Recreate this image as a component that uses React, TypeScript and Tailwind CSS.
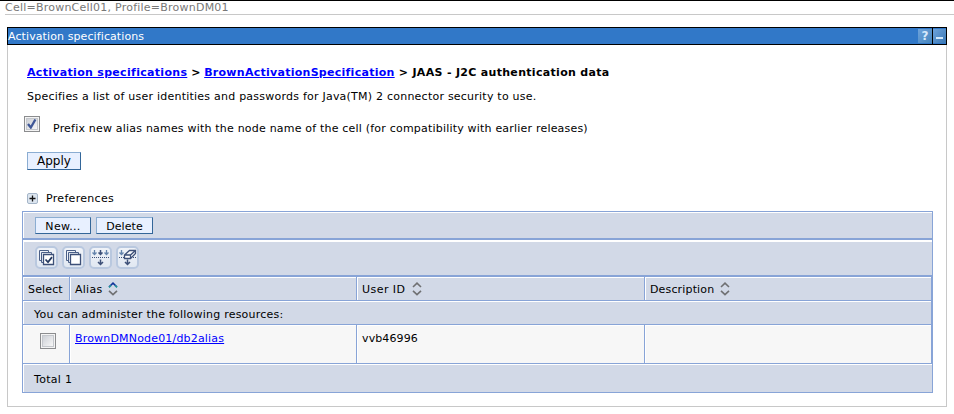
import type { ReactNode } from 'react';

function SortArrows({ active = false }: { active?: boolean }) {
  return (
    <svg width="10" height="14" viewBox="0 0 10 14" fill="none" strokeWidth="1.6" className="shrink-0">
      <path d="M1 5 L5 1.2 L9 5" stroke={active ? '#10339a' : '#6f7072'} />
      {active && <path d="M1 5.4 L3 3.5 M9 5.4 L7 3.5" stroke="#259b9b" />}
      <path d="M1 8.8 L5 12.6 L9 8.8" stroke="#6f7072" />
    </svg>
  );
}

function Button({ children, className }: { children: ReactNode; className: string }) {
  return (
    <button
      className={`flex shrink-0 items-center justify-center whitespace-nowrap border border-t-[#8badd2] border-l-[#8badd2] border-r-[#336699] border-b-[#336699] bg-[#e8f0ff] ${className}`}
    >
      {children}
    </button>
  );
}

function Checkbox({ checked = false }: { checked?: boolean }) {
  return (
    <span className="block size-4 shrink-0 border border-[#8b8c8e] bg-[#f4f4f4] p-px">
      <span className="block size-3 border border-[#c4c7cc] bg-linear-to-br from-[#cdd0d6] to-[#f7f7f7]">
        {checked && (
          <svg width="10" height="10" viewBox="0 0 10 10" fill="none" stroke="#3f5797" strokeWidth="2.3">
            <path d="M1 5 L3.8 8.5 L8.4 0.5" />
          </svg>
        )}
      </span>
    </span>
  );
}

function Tool({ children }: { children: ReactNode }) {
  return (
    <span className="flex size-[23px] items-center justify-center rounded-[5px] border-2 border-[#b9c8df] bg-linear-to-b from-[#f0f3f8] to-[#e1e8f2]">
      <svg width="19" height="19" viewBox="0 0 19 19" fill="none" stroke="#3d5078" strokeWidth="1" className="shrink-0">
        {children}
      </svg>
    </span>
  );
}

function Stack() {
  return (
    <>
      <path d="M2.5 2.5h9v10h-9z" fill="#eef2f8" stroke="#4a5f87" />
      <path d="M4.5 4.5h10v10h-10z" fill="#eef2f8" stroke="#4a5f87" />
      <path d="M6.5 6.5h10v10h-10z" fill="#fff" strokeWidth="1.3" />
    </>
  );
}

const headCell = 'flex items-center gap-[6px] border-l border-[#88a4d7] pt-px shadow-[inset_1px_1px_0_#fff]';
const bodyCell = 'border-l border-[#88a4d7] shadow-[inset_1px_1px_0_#fff]';

export default function App() {
  return (
    <div className="h-[414px] w-[954px] overflow-hidden whitespace-nowrap border-t border-black bg-white font-['DejaVu_Sans',Verdana,sans-serif] text-[11px] leading-[14px] text-black">
      <div className="ml-[5px] h-[14px] border-b border-[#c8c8c8] text-[#777]">
        <span className="block leading-[13px] tracking-[0.23px]">Cell=BrownCell01, Profile=BrownDM01</span>
      </div>
      <main className="mt-3 ml-[7px] h-[380px] w-[940px] border border-t-0 border-[#c8c8c8]">
        <header className="-mx-px flex h-[18px] border border-black bg-[#3178c8] text-white">
          <span className="flex-1 pt-px leading-4 tracking-[0.1px]">Activation specifications</span>
          <span className="my-px flex h-[14px] w-[14px] items-center justify-center bg-linear-to-br from-[#6ea3dc] to-[#4585bd] text-[12px] font-bold text-[#d7e9fb]">?</span>
          <span className="flex w-[14px] border-l border-black pt-px">
            <span className="flex h-[14px] w-[13px] items-center justify-center bg-linear-to-br from-[#6ea3dc] to-[#3b79b5]">
              <span className="mt-[3px] h-[2px] w-[7px] bg-[#d3e9fb]" />
            </span>
          </span>
        </header>

        <h1 className="mt-[21px] ml-[19px] font-bold leading-[14px] tracking-[0.31px]">
          <a className="text-[#0000ff] underline">Activation specifications</a>
          <span className="tracking-[0px]">{' > '}</span>
          <a className="tracking-[0.27px] text-[#0000ff] underline">BrownActivationSpecification</a>
          {' > JAAS - J2C authentication data'}
        </h1>
        <p className="mt-[10px] ml-[19px] tracking-[0.23px]">
          Specifies a list of user identities and passwords for Java(TM) 2 connector security to use.
        </p>
        <label className="mt-3 ml-4 flex h-[19px] gap-[13px]">
          <Checkbox checked />
          <span className="mt-[6px] tracking-[0.2px]">Prefix new alias names with the node name of the cell (for compatibility with earlier releases)</span>
        </label>
        <Button className="mt-[17px] ml-[19px] h-[18px] w-[54px] text-[12px]">Apply</Button>
        <div className="mt-[21px] ml-[19px] flex h-[14px] items-center gap-2">
          <svg width="11" height="11" viewBox="0 0 11 11" className="mt-px">
            <rect x=".5" y=".5" width="10" height="10" rx="1.5" fill="#dce5ef" stroke="#a5b5c8" />
            <path d="M2.5 5.5h6M5.5 2.5v6" stroke="#111" strokeWidth="1.3" />
          </svg>
          <span className="pt-[2px] tracking-[0.3px]">Preferences</span>
        </div>

        <section className="mt-[6px] ml-[14px] h-[182px] w-[911px] border border-[#88a4d7] bg-[#d2d9e7]">
          <div className="flex h-[27px] gap-[5px] border-b border-[#88a4d7] pt-[5px] pl-3 shadow-[inset_1px_1px_0_#fff]">
            <Button className="h-[17px] w-[56px] pt-[2px] tracking-[0.3px]">New...</Button>
            <Button className="h-[17px] w-[57px] pt-[2px] tracking-[0.1px]">Delete</Button>
          </div>
          <div className="flex h-[37px] gap-1 border-y border-[#88a4d7] pt-[6px] pl-3 shadow-[inset_1px_2px_0_#fff]">
            <Tool>
              <Stack />
              <path d="M8.5 11.5l2.5 2.6 4-5" stroke="#25395f" strokeWidth="1.7" />
            </Tool>
            <Tool>
              <Stack />
            </Tool>
            <Tool>
              <path d="M3.5 2v5M15.5 2v5M1.5 4.5l2 2 2-2M13.5 4.5l2 2 2-2" stroke="#6484ac" strokeWidth="1.3" />
              <path d="M9.5 2v5M7.5 4.5l2 2 2-2M9.5 11.5v5M7 14l2.5 2.5L12 14" strokeWidth="1.5" />
              <path d="M1 9.5h17" strokeDasharray="1 1" />
            </Tool>
            <Tool>
              <path d="M3.5 2v5M1.5 4.5l2 2 2-2" stroke="#6484ac" strokeWidth="1.3" />
              <path d="M1 9.5h17" strokeDasharray="1 1" />
              <path d="M9.5 11.5v5M7 14l2.5 2.5L12 14" strokeWidth="1.5" />
              <path d="M6.5 7l5-4.5h6v3l-5 5h-6zM6.5 7h6l5-4.5M12.5 7v3.5" fill="#fff" strokeWidth="1.3" />
            </Tool>
          </div>
          <div className="grid h-[25px] grid-cols-[46px_287px_288px_1fr] border-y border-r border-[#88a4d7]">
            <div className="flex items-center pt-[2px] pl-[5px] tracking-[0.15px] shadow-[inset_1px_1px_0_#fff]">Select</div>
            <div className={`${headCell} pl-[5px]`}><span className="pt-px tracking-[0.25px]">Alias</span> <SortArrows active /></div>
            <div className={`${headCell} pl-[5px]`}><span className="pt-px pr-px tracking-[0.45px]">User ID</span> <SortArrows /></div>
            <div className={`${headCell} pl-[5px]`}><span className="pt-px tracking-[0.15px]">Description</span> <SortArrows /></div>
          </div>
          <div className="h-[24px] border-r border-b border-[#88a4d7] pt-px pl-[11px] leading-[26px] tracking-[0.23px] shadow-[inset_1px_1px_0_#fff]">
            You can administer the following resources:
          </div>
          <div className="grid h-[39px] grid-cols-[46px_287px_288px_1fr] border-r border-b border-[#88a4d7] bg-[#f7f7f7]">
            <div className="pt-2 pl-[17px] shadow-[inset_1px_1px_0_#fff]"><Checkbox /></div>
            <div className={`${bodyCell} pt-[7px] pl-[5px]`}><a className="tracking-[0.18px] text-[#0000ff] underline">BrownDMNode01/db2alias</a></div>
            <div className={`${bodyCell} pt-[7px] pl-[5px] tracking-[0.12px]`}>vvb46996</div>
            <div className={bodyCell} />
          </div>
          <div className="h-[28px] pt-px pl-[11px] leading-[30px] tracking-[0.3px] shadow-[inset_1px_1px_0_#fff]">Total 1</div>
        </section>
      </main>
    </div>
  );
}
